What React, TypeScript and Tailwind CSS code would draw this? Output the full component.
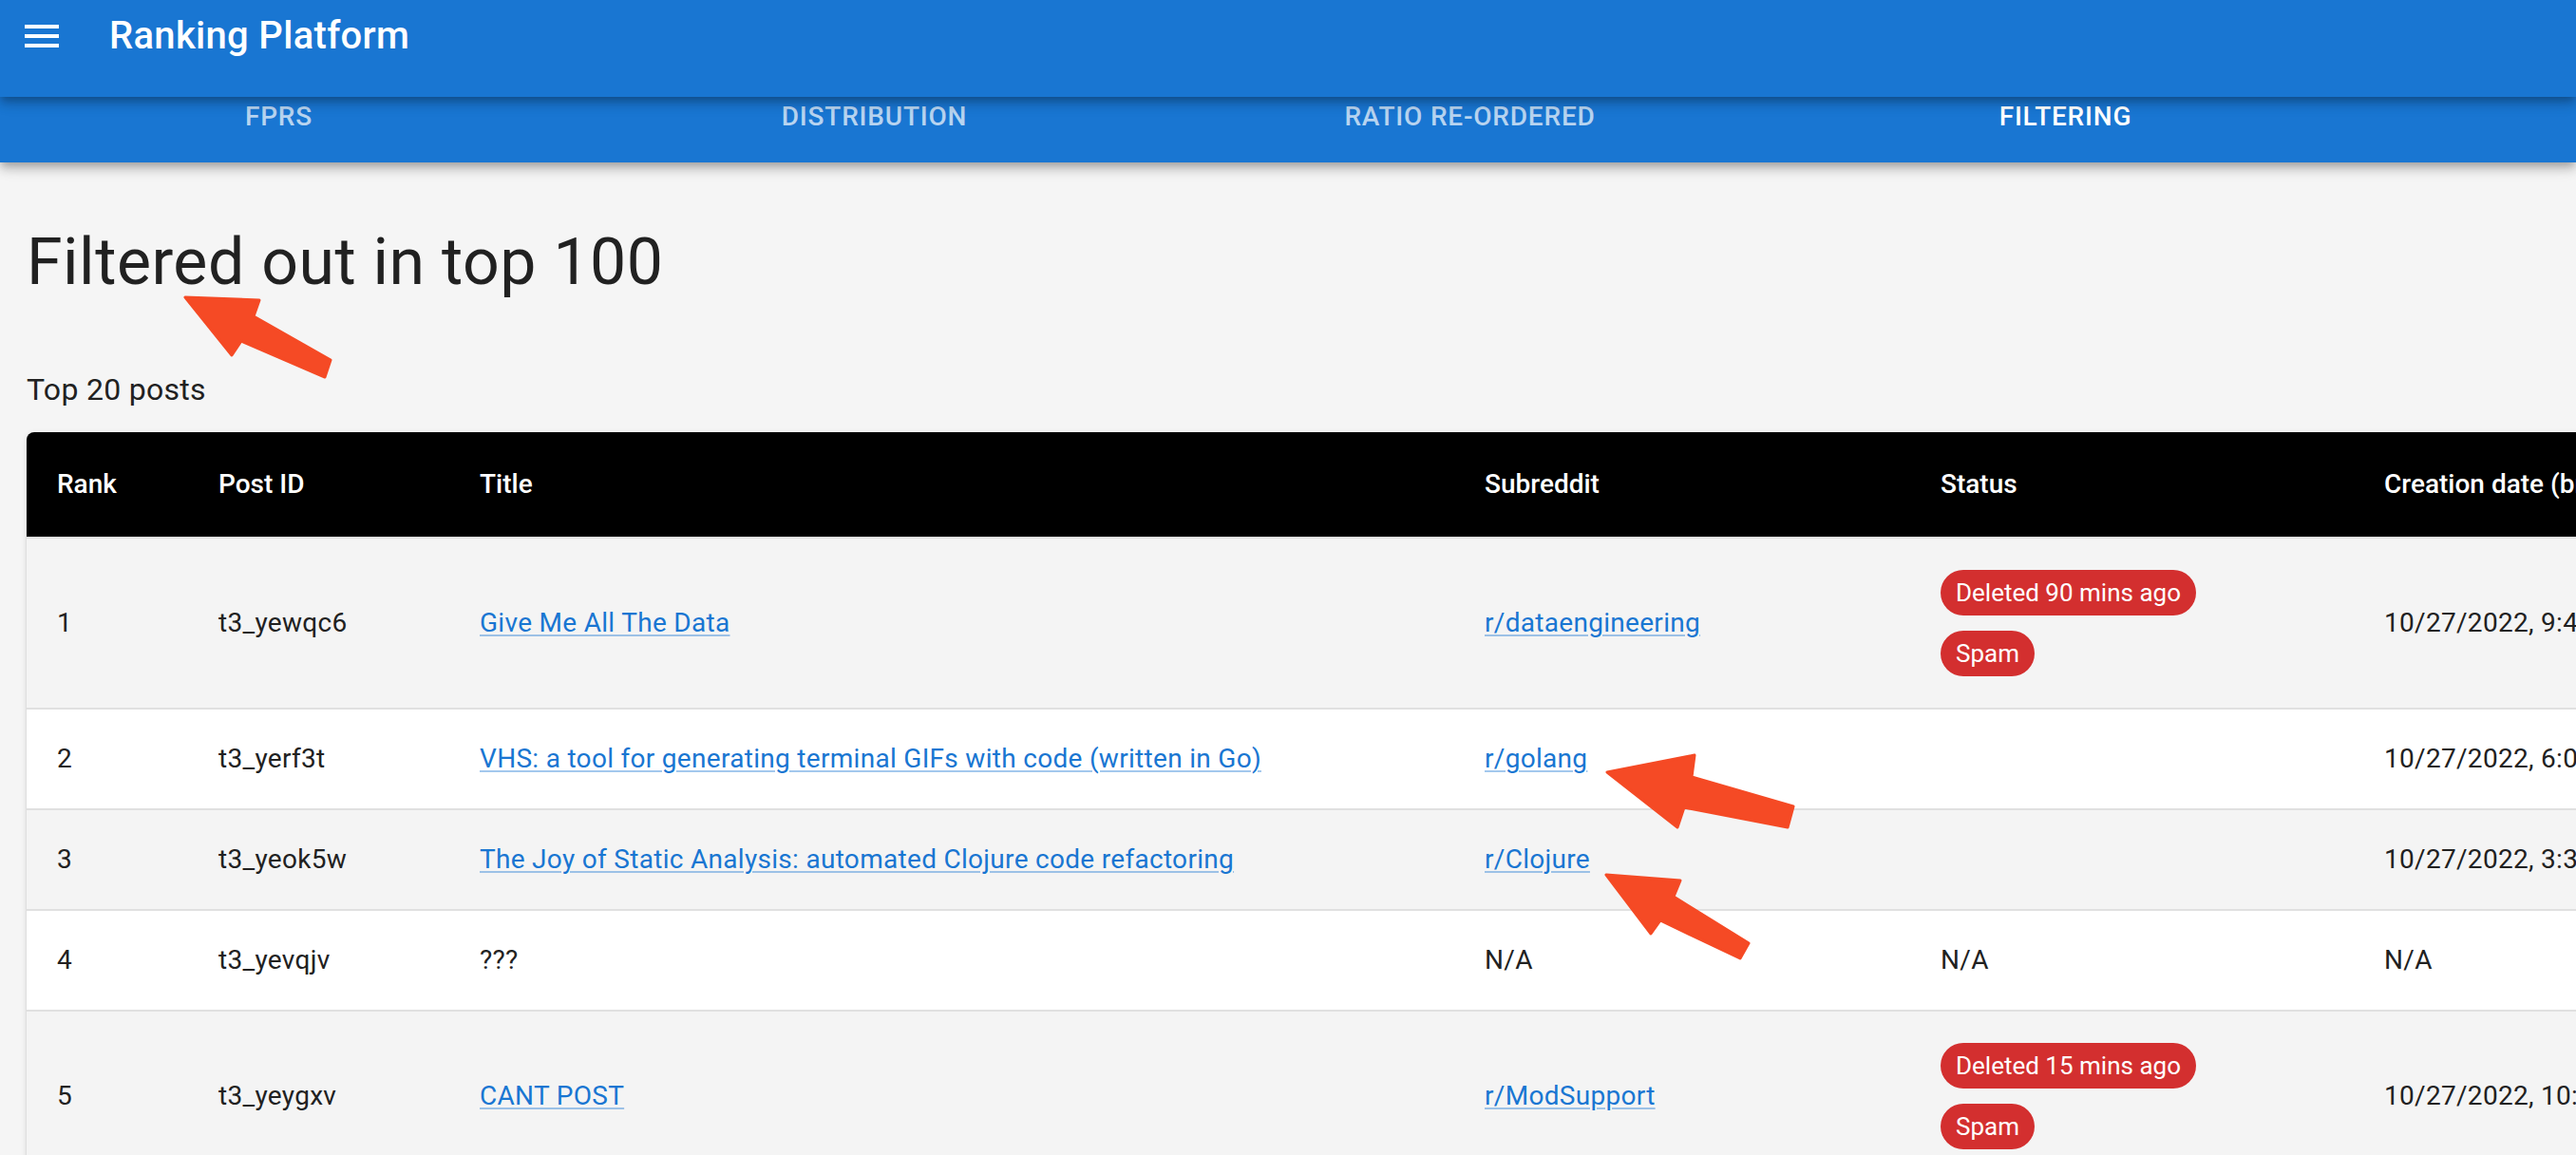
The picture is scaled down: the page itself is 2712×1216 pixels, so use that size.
const tabs = ["FPRS", "Distribution", "Ratio re-ordered", "Filtering"];
const active = "Filtering";

type Post = {
  rank: number;
  id: string;
  title: string;
  link: boolean;
  sub: string;
  status: string[] | null;
  date: string;
};

const posts: Post[] = [
  {
    rank: 1,
    id: "t3_yewqc6",
    title: "Give Me All The Data",
    link: true,
    sub: "r/dataengineering",
    status: ["Deleted 90 mins ago", "Spam"],
    date: "10/27/2022, 9:46:21 PM",
  },
  {
    rank: 2,
    id: "t3_yerf3t",
    title: "VHS: a tool for generating terminal GIFs with code (written in Go)",
    link: true,
    sub: "r/golang",
    status: [],
    date: "10/27/2022, 6:04:52 AM",
  },
  {
    rank: 3,
    id: "t3_yeok5w",
    title: "The Joy of Static Analysis: automated Clojure code refactoring",
    link: true,
    sub: "r/Clojure",
    status: [],
    date: "10/27/2022, 3:31:09 AM",
  },
  {
    rank: 4,
    id: "t3_yevqjv",
    title: "???",
    link: false,
    sub: "N/A",
    status: null,
    date: "N/A",
  },
  {
    rank: 5,
    id: "t3_yeygxv",
    title: "CANT POST",
    link: true,
    sub: "r/ModSupport",
    status: ["Deleted 15 mins ago", "Spam"],
    date: "10/27/2022, 10:12:40 AM",
  },
];

const cols = "grid grid-cols-[170px_275px_1058px_480px_467px_640px]";
const cell = "flex items-center pl-8 pr-8";
const linkCls =
  "text-[#1976d2] underline decoration-[#1976d2]/40 decoration-2 underline-offset-[3px]";

function MenuIcon() {
  return (
    <svg width="48" height="48" viewBox="0 0 24 24" fill="#fff">
      <path d="M3 18h18v-2H3v2zm0-5h18v-2H3v2zm0-7v2h18V6H3z" />
    </svg>
  );
}

function Arrows() {
  return (
    <svg
      className="absolute inset-0 pointer-events-none"
      width="2712"
      height="1216"
      viewBox="0 0 2712 1216"
    >
      <g fill="#f54a25" stroke="#f54a25" strokeWidth="3" strokeLinejoin="round">
        <polygon points="195,313 273,316 267,333 348,379 342,397 254,359 244,374" />
        <polygon points="1692,813 1784,795 1781,818 1888,849 1882,871 1773,850 1766,871" />
        <polygon points="1691,921 1769,927 1762,944 1841,993 1832,1009 1748,969 1738,983" />
      </g>
    </svg>
  );
}

export default function App() {
  return (
    <div className="relative w-[2712px] h-[1216px] overflow-hidden bg-[#f5f5f5] font-['Roboto','Liberation_Sans',sans-serif] text-[#212121]">
      {/* App bar */}
      <div className="relative z-20 h-[102px] bg-[#1976d2] flex items-start pt-[14px] pl-[20px] gap-[47px] shadow-[0_4px_8px_-2px_rgba(0,0,0,0.2),0_8px_10px_0_rgba(0,0,0,0.14),0_2px_20px_0_rgba(0,0,0,0.12)]">
        <MenuIcon />
        <h1 className="text-[40px] leading-[48px] font-medium text-white tracking-[0.0075em]">
          Ranking Platform
        </h1>
      </div>

      {/* Tabs */}
      <div className="relative z-10 h-[69px] bg-[#1976d2] shadow-[0_4px_8px_-2px_rgba(0,0,0,0.2),0_8px_10px_0_rgba(0,0,0,0.14),0_2px_20px_0_rgba(0,0,0,0.12)]">
        <div className="flex ml-[-20px] pt-[1px]">
          {tabs.map((t) => (
            <div
              key={t}
              className={`w-[627px] shrink-0 flex justify-center text-[28px] leading-[40px] font-medium uppercase tracking-[0.02857em] ${
                t === active ? "text-white" : "text-white/70"
              }`}
            >
              {t}
            </div>
          ))}
        </div>
      </div>

      {/* Content */}
      <div className="pl-[28px] pt-[63px]">
        <h2 className="text-[68px] leading-[84px] font-normal tracking-[0.00735em]">
          Filtered out in top 100
        </h2>
        <p className="mt-[68px] text-[32px] leading-[48px] tracking-[0.00938em]">
          Top 20 posts
        </p>

        <div className="mt-[21px] w-[3090px] rounded-[8px] overflow-hidden bg-white shadow-[0_4px_2px_-2px_rgba(0,0,0,0.2),0_2px_2px_0_rgba(0,0,0,0.14),0_2px_6px_0_rgba(0,0,0,0.12)]">
          <div className={`${cols} h-[112px] bg-black border-b-2 border-[#e0e0e0] text-white text-[28px] font-medium`}>
            <div className={cell}>Rank</div>
            <div className={cell}>Post ID</div>
            <div className={cell}>Title</div>
            <div className={cell}>Subreddit</div>
            <div className={cell}>Status</div>
            <div className={`${cell} whitespace-nowrap`}>Creation date (browser time)</div>
          </div>

          {posts.map((p, i) => {
            const tall = p.status && p.status.length > 0;
            return (
              <div
                key={p.id}
                className={`${cols} ${tall ? "h-[180px]" : "h-[106px]"} ${
                  i % 2 === 0 ? "bg-[#f4f4f4]" : "bg-white"
                } border-b-2 border-[#e0e0e0] text-[28px] leading-[40px] tracking-[0.01071em]`}
              >
                <div className={cell}>{p.rank}</div>
                <div className={cell}>{p.id}</div>
                <div className={cell}>
                  {p.link ? <span className={linkCls}>{p.title}</span> : p.title}
                </div>
                <div className={cell}>
                  {p.sub === "N/A" ? p.sub : <span className={linkCls}>{p.sub}</span>}
                </div>
                <div className={cell}>
                  {p.status === null ? (
                    "N/A"
                  ) : (
                    <div className="flex flex-col items-start gap-4">
                      {p.status.map((s) => (
                        <span
                          key={s}
                          className="h-[48px] px-4 flex items-center rounded-full bg-[#d32f2f] text-white text-[26px] leading-none tracking-normal"
                        >
                          {s}
                        </span>
                      ))}
                    </div>
                  )}
                </div>
                <div className={`${cell} whitespace-nowrap`}>{p.date}</div>
              </div>
            );
          })}
        </div>
      </div>

      <Arrows />
    </div>
  );
}
